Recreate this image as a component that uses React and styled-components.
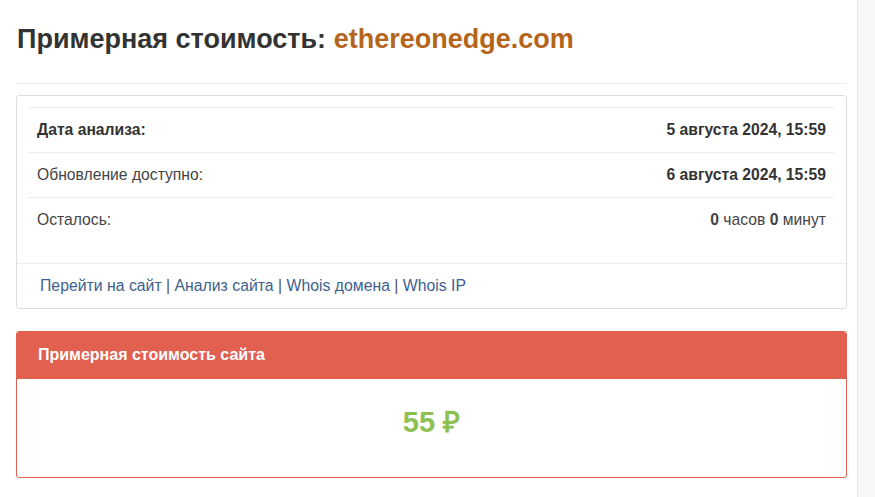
import React from 'react';
import styled, { createGlobalStyle } from 'styled-components';

const GlobalStyle = createGlobalStyle`
  html, body {
    margin: 0;
    padding: 0;
    background: #fff;
    font-family: "Liberation Sans", Arial, sans-serif;
    color: #333;
  }
`;

const Page = styled.div`
  display: flex;
  min-height: 497px;
`;

const Main = styled.main`
  flex: 1;
  padding: 0 10px 0 16px;
`;

const Side = styled.aside`
  width: 17px;
  background: #f7f7f7;
  border-left: 1px solid #e6e6e6;
`;

const Title = styled.h1`
  margin: 0;
  padding: 24px 1px 0;
  font-size: 27px;
  line-height: 30px;
  font-weight: 700;
  color: #333;
`;

const Domain = styled.span`
  color: #b5651b;
`;

const Rule = styled.hr`
  margin: 29px 0 11px;
  border: 0;
  border-top: 1px solid #eee;
`;

const Panel = styled.section`
  border: 1px solid ${p => p.$color || '#ddd'};
  border-radius: 3px;
  margin-bottom: 22px;
  overflow: hidden;
`;

const Body = styled.div`
  padding: 11px;
`;

const Table = styled.table`
  width: 100%;
  border-collapse: collapse;
  margin-bottom: 10px;
  font-size: 15.7px;
`;

const Cell = styled.td`
  border-top: 1px solid #eee;
  padding: 12px 9px;
  line-height: 20px;
  text-align: ${p => (p.$right ? 'right' : 'left')};
  font-weight: ${p => (p.$bold ? 700 : 400)};
  color: ${p => (p.$bold ? '#333' : '#444')};
`;

const Footer = styled.div`
  border-top: 1px solid #eee;
  padding: 12px 23px;
  line-height: 20px;
  font-size: 15.8px;
  color: #555;
`;

const Link = styled.a`
  color: #3e5f8f;
  text-decoration: none;
`;

const Heading = styled.div`
  background: #e2604f;
  color: #fff;
  font-weight: 700;
  font-size: 16px;
  line-height: 20px;
  padding: 13px 21px 14px;
`;

const Price = styled.div`
  text-align: center;
  padding: 28px 0 40px;
  font-size: 29px;
  line-height: 30px;
  font-weight: 700;
  color: #8cc152;
`;

const links = ['Перейти на сайт', 'Анализ сайта', 'Whois домена', 'Whois IP'];

export default function App() {
  return (
    <>
      <GlobalStyle />
      <Page>
        <Main>
          <Title>
            Примерная стоимость: <Domain>ethereonedge.com</Domain>
          </Title>
          <Rule />
          <Panel>
            <Body>
              <Table>
                <tbody>
                  <tr>
                    <Cell $bold>Дата анализа:</Cell>
                    <Cell $right $bold>5 августа 2024, 15:59</Cell>
                  </tr>
                  <tr>
                    <Cell>Обновление доступно:</Cell>
                    <Cell $right $bold>6 августа 2024, 15:59</Cell>
                  </tr>
                  <tr>
                    <Cell>Осталось:</Cell>
                    <Cell $right>
                      <b>0</b> часов <b>0</b> минут
                    </Cell>
                  </tr>
                </tbody>
              </Table>
            </Body>
            <Footer>
              {links.map((l, i) => (
                <React.Fragment key={l}>
                  {i > 0 && ' | '}
                  <Link href="#">{l}</Link>
                </React.Fragment>
              ))}
            </Footer>
          </Panel>
          <Panel $color="#e2604f">
            <Heading>Примерная стоимость сайта</Heading>
            <Price>55 ₽</Price>
          </Panel>
        </Main>
        <Side />
      </Page>
    </>
  );
}
